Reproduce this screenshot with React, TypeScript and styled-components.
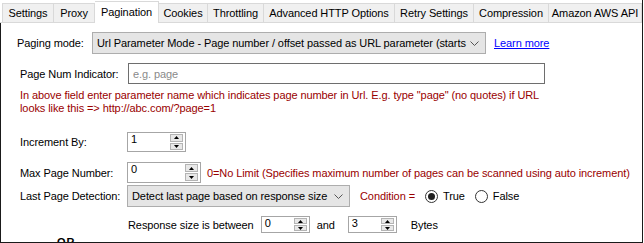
import React from 'react';
import styled, { createGlobalStyle } from 'styled-components';

const GlobalStyle = createGlobalStyle`
  body {
    margin: 0;
    background: #ffffff;
    font-family: "Liberation Sans", Arial, sans-serif;
    font-size: 11px;
    letter-spacing: -0.09px;
    color: #000;
  }
`;

// Outer window frame
const Frame = styled.div`
  width: 642px;
  height: 243px;
  border-right: 1px solid #1a1a1a;
  display: flex;
  flex-direction: column;
  overflow: hidden;
  background: #fff;
`;

const TabStrip = styled.div`
  display: flex;
  align-items: flex-end;
  height: 22px;
  padding-left: 2px;
  border-bottom: 1px solid #d9d9d9;
`;

const Tab = styled.div<{ $w: number; $active?: boolean; $first?: boolean }>`
  box-sizing: border-box;
  width: ${(p) => p.$w}px;
  height: ${(p) => (p.$active ? 22 : 19)}px;
  margin-bottom: ${(p) => (p.$active ? -1 : 0)}px;
  padding-bottom: ${(p) => (p.$active ? 2 : 0)}px;
  position: relative;
  z-index: ${(p) => (p.$active ? 1 : 0)};
  display: flex;
  align-items: center;
  justify-content: center;
  white-space: nowrap;
  background: ${(p) => (p.$active ? '#ffffff' : '#f0f0f0')};
  border-top: 1px solid #d9d9d9;
  border-right: 1px solid #d9d9d9;
  border-left: ${(p) => (p.$first ? '1px solid #d9d9d9' : 'none')};
`;

const Panel = styled.div`
  flex: 1;
  border-left: 1px solid #1a1a1a;
  border-bottom: 1px solid #1a1a1a;
  display: flex;
  flex-direction: column;
  overflow: hidden;
`;

const Row = styled.div<{ $top: number; $left?: number; $h: number }>`
  display: flex;
  align-items: center;
  height: ${(p) => p.$h}px;
  margin-top: ${(p) => p.$top}px;
  padding-left: ${(p) => p.$left ?? 19}px;
  white-space: nowrap;
`;

const Label = styled.span<{ $w: number }>`
  width: ${(p) => p.$w}px;
  flex-shrink: 0;
`;

const Select = styled.div<{ $w: number }>`
  box-sizing: border-box;
  width: ${(p) => p.$w}px;
  height: 22px;
  flex-shrink: 0;
  display: flex;
  align-items: center;
  padding: 0 6px 0 4px;
  background: #e5e5e5;
  border: 1px solid #adadad;
  overflow: hidden;

  span {
    flex: 1;
    white-space: nowrap;
  }
`;

const TextInput = styled.div`
  box-sizing: border-box;
  width: 417px;
  height: 21px;
  display: flex;
  align-items: center;
  padding-left: 4px;
  border: 1px solid #6e6e6e;
  color: #8a8a8a;
`;

const LearnMore = styled.a`
  margin-left: 8px;
  color: #0000ff;
  text-decoration: underline;
  cursor: pointer;
`;

const HelpText = styled.div`
  margin-top: 5px;
  padding-left: 19px;
  line-height: 13px;
  color: #990000;
`;

const Note = styled.span<{ $gap: number }>`
  margin-left: ${(p) => p.$gap}px;
  color: #990000;
`;

const Plain = styled.span<{ $gap: number }>`
  margin-left: ${(p) => p.$gap}px;
`;

const SpinBox = styled.div<{ $w: number; $h: number; $gap?: number }>`
  box-sizing: border-box;
  width: ${(p) => p.$w}px;
  height: ${(p) => p.$h}px;
  margin-left: ${(p) => p.$gap ?? 0}px;
  flex-shrink: 0;
  display: flex;
  align-items: stretch;
  padding: 1px 2px 1px 0;
  border: 1px solid #a6a6a6;
`;

const SpinValue = styled.span`
  flex: 1;
  padding-left: 3px;
  line-height: 11px;
`;

const SpinButtons = styled.div`
  width: 13px;
  display: flex;
  flex-direction: column;
  gap: 1px;
`;

const SpinButton = styled.div`
  flex: 1;
  display: flex;
  align-items: center;
  justify-content: center;
  background: #e8e8e8;
  border: 1px solid #b4b4b4;
`;

const RadioCircle = styled.span<{ $gap: number; $on?: boolean }>`
  box-sizing: border-box;
  width: 13px;
  height: 13px;
  margin-left: ${(p) => p.$gap}px;
  margin-right: 5px;
  border-radius: 50%;
  border: 1px solid #333;
  display: flex;
  align-items: center;
  justify-content: center;

  &::after {
    content: '';
    display: ${(p) => (p.$on ? 'block' : 'none')};
    width: 7px;
    height: 7px;
    border-radius: 50%;
    background: #1f1f1f;
  }
`;

const OrMark = styled.div`
  margin-top: 3px;
  padding-left: 44px;
  font-weight: bold;
  line-height: 13px;
  letter-spacing: 1px;
`;

const Chevron = () => (
  <svg width="9" height="5" viewBox="0 0 9 5">
    <polyline points="0.5,0.5 4.5,4.5 8.5,0.5" fill="none" stroke="#555" strokeWidth="1" />
  </svg>
);

const Arrow = ({ up }: { up?: boolean }) => (
  <svg width="5" height="3" viewBox="0 0 5 3">
    <polygon points={up ? '2.5,0 5,3 0,3' : '0,0 5,0 2.5,3'} fill="#000" />
  </svg>
);

const Spinner = ({ value, w, h, gap }: { value: string; w: number; h: number; gap?: number }) => (
  <SpinBox $w={w} $h={h} $gap={gap}>
    <SpinValue>{value}</SpinValue>
    <SpinButtons>
      <SpinButton>
        <Arrow up />
      </SpinButton>
      <SpinButton>
        <Arrow />
      </SpinButton>
    </SpinButtons>
  </SpinBox>
);

const tabs = [
  { name: 'Settings', w: 52 },
  { name: 'Proxy', w: 41 },
  { name: 'Pagination', w: 64, active: true },
  { name: 'Cookies', w: 49 },
  { name: 'Throttling', w: 56 },
  { name: 'Advanced HTTP Options', w: 131 },
  { name: 'Retry Settings', w: 79 },
  { name: 'Compression', w: 75 },
  { name: 'Amazon AWS API', w: 93 },
];

const App: React.FC = () => {
  return (
    <>
      <GlobalStyle />
      <Frame>
        <TabStrip>
          {tabs.map((t, i) => (
            <Tab key={t.name} $w={t.w} $active={t.active} $first={i === 0}>
              {t.name}
            </Tab>
          ))}
        </TabStrip>
        <Panel>
          <Row $top={9} $left={16} $h={22}>
            <Label $w={75}>Paging mode:</Label>
            <Select $w={394}>
              <span>Url Parameter Mode - Page number / offset passed as URL parameter (starts</span>
              <Chevron />
            </Select>
            <LearnMore>Learn more</LearnMore>
          </Row>
          <Row $top={9} $h={21}>
            <Label $w={108}>Page Num Indicator:</Label>
            <TextInput>e.g. page</TextInput>
          </Row>
          <HelpText>
            In above field enter parameter name which indicates page number in Url. E.g. type "page" (no quotes) if URL
            <br />
            looks like this =&gt; http://abc.com/?page=1
          </HelpText>
          <Row $top={17} $h={20}>
            <Label $w={107}>Increment By:</Label>
            <Spinner value="1" w={59} h={20} />
          </Row>
          <Row $top={10} $h={21}>
            <Label $w={107}>Max Page Number:</Label>
            <Spinner value="0" w={74} h={21} />
            <Note $gap={6}>0=No Limit (Specifies maximum number of pages can be scanned using auto increment)</Note>
          </Row>
          <Row $top={2} $h={22}>
            <Label $w={107}>Last Page Detection:</Label>
            <Select $w={223}>
              <span>Detect last page based on response size</span>
              <Chevron />
            </Select>
            <Note $gap={10}>Condition =</Note>
            <RadioCircle $gap={10} $on />
            <span>True</span>
            <RadioCircle $gap={10} />
            <span>False</span>
          </Row>
          <Row $top={9} $left={127} $h={17}>
            <span>Response size is between</span>
            <Spinner value="0" w={49} h={17} gap={7} />
            <Plain $gap={7}>and</Plain>
            <Spinner value="3" w={49} h={17} gap={13} />
            <Plain $gap={14}>Bytes</Plain>
          </Row>
          <OrMark>—OR—</OrMark>
        </Panel>
      </Frame>
    </>
  );
};

export default App;
